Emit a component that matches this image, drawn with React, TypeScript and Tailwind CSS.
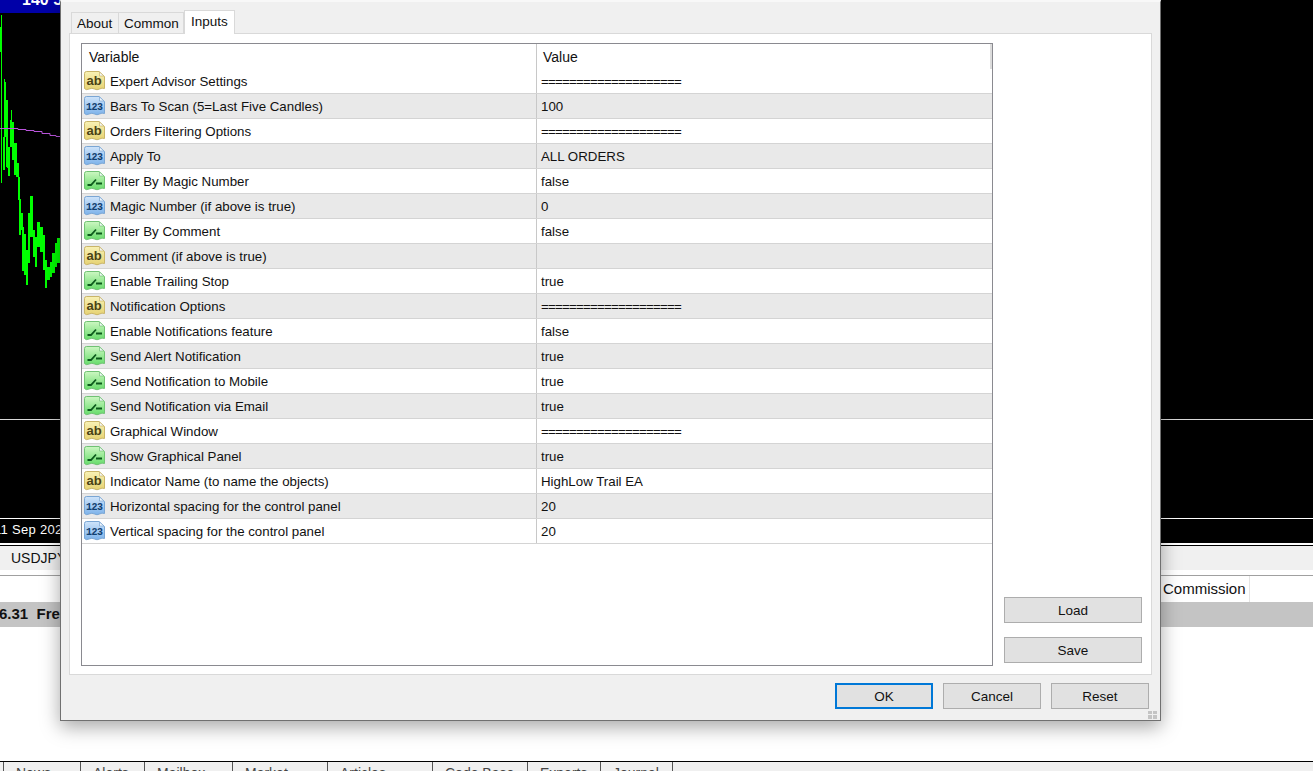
import React from 'react';

type Kind = 'ab' | 'num' | 'bool';
type Row = { kind: Kind; name: string; value: string };

const sep = '====================';

const rows: Row[] = [
  { kind: 'ab', name: 'Expert Advisor Settings', value: sep },
  { kind: 'num', name: 'Bars To Scan (5=Last Five Candles)', value: '100' },
  { kind: 'ab', name: 'Orders Filtering Options', value: sep },
  { kind: 'num', name: 'Apply To', value: 'ALL ORDERS' },
  { kind: 'bool', name: 'Filter By Magic Number', value: 'false' },
  { kind: 'num', name: 'Magic Number (if above is true)', value: '0' },
  { kind: 'bool', name: 'Filter By Comment', value: 'false' },
  { kind: 'ab', name: 'Comment (if above is true)', value: '' },
  { kind: 'bool', name: 'Enable Trailing Stop', value: 'true' },
  { kind: 'ab', name: 'Notification Options', value: sep },
  { kind: 'bool', name: 'Enable Notifications feature', value: 'false' },
  { kind: 'bool', name: 'Send Alert Notification', value: 'true' },
  { kind: 'bool', name: 'Send Notification to Mobile', value: 'true' },
  { kind: 'bool', name: 'Send Notification via Email', value: 'true' },
  { kind: 'ab', name: 'Graphical Window', value: sep },
  { kind: 'bool', name: 'Show Graphical Panel', value: 'true' },
  { kind: 'ab', name: 'Indicator Name (to name the objects)', value: 'HighLow Trail EA' },
  { kind: 'num', name: 'Horizontal spacing for the control panel', value: '20' },
  { kind: 'num', name: 'Vertical spacing for the control panel', value: '20' },
];

// x, width, top, bottom of each green bar on the chart
const bars: number[][] = [
  [0, 2, 27, 52], [1, 1, 15, 183], [3, 2, 137, 170], [4, 1, 79, 170], [5, 1, 82, 137], [6, 2, 100, 167],
  [8, 2, 147, 176], [7, 3, 160, 168], [10, 2, 120, 147], [11, 1, 110, 147], [12, 2, 122, 160],
  [14, 3, 143, 175], [16, 3, 163, 177], [18, 2, 177, 200], [19, 2, 199, 235], [21, 2, 213, 230],
  [22, 2, 227, 271], [24, 2, 234, 275], [26, 2, 250, 285], [28, 2, 213, 263], [30, 3, 196, 237],
  [33, 2, 230, 257], [35, 2, 237, 267], [37, 3, 222, 247], [40, 3, 227, 252], [43, 2, 235, 270],
  [45, 2, 260, 288], [47, 3, 267, 280], [50, 2, 262, 277], [52, 3, 253, 273], [55, 2, 243, 267], [57, 3, 238, 263],
];

const bottomTabs = [
  { name: 'News', w: 'w-[77px]' },
  { name: 'Alerts', w: 'w-[64px]' },
  { name: 'Mailbox', w: 'w-[88px]' },
  { name: 'Market', w: 'w-[95px]' },
  { name: 'Articles', w: 'w-[105px]' },
  { name: 'Code Base', w: 'w-[95px]' },
  { name: 'Experts', w: 'w-[73px]' },
  { name: 'Journal', w: 'w-[72px]' },
];

function Chart() {
  return (
    <svg width="60" height="406" viewBox="0 13 60 406" className="block">
      {bars.map((b, i) => (
        <rect key={i} x={b[0]} y={b[2]} width={b[1]} height={b[3] - b[2]} fill="#00ff00" />
      ))}
      <path d="M0 128.500H18V129.500H26V130.500H34V131.500H42V133.500H50V135.500H56V136.500H60" fill="none" stroke="#bb55dd" strokeWidth="1" />
    </svg>
  );
}

function TypeIcon({ kind }: { kind: Kind }) {
  const id = `grad-${kind}`;
  const top = kind === 'ab' ? '#f8f1b4' : kind === 'num' ? '#cfe4fa' : '#ccf7c2';
  const bottom = kind === 'ab' ? '#e6d272' : kind === 'num' ? '#7cb2ea' : '#66dc6a';
  const line = kind === 'ab' ? '#c9b568' : kind === 'num' ? '#7aa6d4' : '#70c274';
  return (
    <svg width="21" height="20" viewBox="0 0 21 20" className="shrink-0">
      <defs>
        <linearGradient id={id} x1="0" y1="0" x2="0" y2="1">
          <stop offset="0" stopColor={top} />
          <stop offset="1" stopColor={bottom} />
        </linearGradient>
      </defs>
      <path
        d="M2.500 .5H15L20.500 5.500V17.500Q18 16.500 15.500 18T10.500 18T5 18T.5 17.500V2.500Q.5 .5 2.500 .5Z"
        fill={`url(#${id})`}
        stroke={line}
      />
      <path d="M15.500 1V5H20Z" fill="#f4f8fc" stroke={line} strokeWidth=".7" />
      {kind === 'ab' && (
        <text x="2.500" y="14" fontSize="13" fontWeight="700" fill="#4a4216" fontFamily="'Liberation Sans', sans-serif">
          ab
        </text>
      )}
      {kind === 'num' && (
        <text x="2" y="14" fontSize="10" fontWeight="700" fill="#12406f" fontFamily="'Liberation Mono', monospace" textLength="17">
          123
        </text>
      )}
      {kind === 'bool' && <path d="M3.500 14H7L12 8.500M12 12.500H18" fill="none" stroke="#0c5a1c" strokeWidth="1.800" />}
    </svg>
  );
}

function Btn({ label, className }: { label: string; className: string }) {
  return <button className={`h-[26px] bg-[#e1e1e1] pt-[2px] text-[13.5px] text-[#111] ${className}`}>{label}</button>;
}

export default function App() {
  return (
    <div className="relative h-[771px] w-[1313px] overflow-hidden bg-white text-[15px] text-[#111] font-['Liberation_Sans',Arial,sans-serif]">
      {/* terminal behind the dialog */}
      <div className="flex h-[13px] bg-black">
        <div className="w-[1160px] overflow-hidden bg-[#0000a8] pl-[22px] text-[16px] font-bold leading-[0px] text-white">140 5</div>
      </div>
      <div className="h-[406px] bg-black">
        <Chart />
      </div>
      <div className="h-px bg-[#d8d8d8]" />
      <div className="h-[98px] bg-black" />
      <div className="h-px bg-white" />
      <div className="h-[24px] overflow-hidden whitespace-nowrap bg-black text-[13px] leading-[22px] tracking-[0.3px] text-white">
        <span className="-ml-[6px] inline-block">11 Sep 2025</span>
      </div>
      <div className="h-[2px] bg-white" />
      <div className="h-px bg-black" />
      <div className="h-[24px] bg-[#f0f0f0] pl-[11px] text-[14px] leading-[24px]">USDJPY</div>
      <div className="h-[5px] bg-white" />
      <div className="h-px bg-[#a0a0a0]" />
      <div className="flex h-[26px] bg-white pl-[1163px] leading-[25px]">
        <div className="w-[87px] border-r border-[#e4e4e4]">Commission</div>
      </div>
      <div className="h-[25px] whitespace-pre bg-[#c4c4c4] font-bold leading-[24px]">
        <span className="-ml-[1px] inline-block">6.31  Free</span>
      </div>
      <div className="h-[134px] bg-white" />
      <div className="h-px bg-black" />
      <div className="flex h-[10px] overflow-hidden bg-[#f0f0f0] pl-[3px] text-[14px] text-[#444]">
        {bottomTabs.map((t) => (
          <div key={t.name} className={`${t.w} h-[24px] border-l border-[#555] pl-[12px] pt-[3px] leading-[16px]`}>
            {t.name}
          </div>
        ))}
        <div className="h-[24px] border-l border-[#555]" />
      </div>

      {/* the dialog window */}
      <div className="absolute left-[60px] top-0 flex h-[721px] w-[1101px] flex-col border-x border-b border-t-2 border-x-[#707070] border-b-[#707070] border-t-[#f8f8f8] bg-[#f0f0f0] px-[8px] text-[13.5px] shadow-[0_6px_18px_rgba(0,0,0,0.35)]">
        <div className="relative z-10 -mb-px flex h-[32px] items-end pl-[2px]">
          <div className="h-[22px] w-[48px] border border-b-0 border-[#d9d9d9] pl-[5px] leading-[21px]">About</div>
          <div className="h-[22px] w-[65px] border-y border-r border-b-0 border-[#d9d9d9] pl-[5px] leading-[21px]">Common</div>
          <div className="h-[24px] w-[51px] border border-b-0 border-[#d9d9d9] bg-white pl-[6px] leading-[21px]">Inputs</div>
        </div>
        <div className="flex h-[642px] border border-[#d9d9d9] bg-white pl-[11px] pt-[9px]">
          <div className="flex h-[623px] w-[912px] flex-col border border-[#8a8a90] text-[13.3px]">
            <div className="flex h-[25px] border-r-2 border-[#dcdcdc] text-[14px] leading-[27px]">
              <div className="w-[455px] border-r border-[#c8c8c8] pl-[7px]">Variable</div>
              <div className="pl-[6px]">Value</div>
            </div>
            {rows.map((r, i) => (
              <div key={r.name} className={`flex h-[25px] border-b border-[#d4d4d4] leading-[26px] ${i % 2 === 1 ? 'bg-[#e9e9e9]' : 'bg-white'}`}>
                <div className="flex w-[455px] items-center gap-[5px] border-r border-[#c8c8c8] pl-[2px]">
                  <TypeIcon kind={r.kind} />
                  <span className="pt-[2px]">{r.name}</span>
                </div>
                <div className={`pl-[4px] ${r.value === sep ? 'tracking-[-0.77px]' : ''}`}>{r.value}</div>
              </div>
            ))}
          </div>
          <div className="flex h-[623px] flex-col justify-end gap-[14px] pb-[3px] pl-[11px]">
            <Btn label="Load" className="w-[138px] border border-[#adadad]" />
            <Btn label="Save" className="w-[138px] border border-[#adadad]" />
          </div>
        </div>
        <div className="flex justify-end gap-[10px] pr-[3px] pt-[8px]">
          <Btn label="OK" className="w-[98px] border-2 border-[#0078d7]" />
          <Btn label="Cancel" className="w-[98px] border border-[#adadad]" />
          <Btn label="Reset" className="w-[98px] border border-[#adadad]" />
        </div>
        <svg width="9" height="9" viewBox="0 0 9 9" className="absolute bottom-[1px] right-[3px]">
          <path d="M0 1H4V4H0ZM5 1H9V4H5ZM0 5H4V9H0ZM5 5H9V9H5Z" fill="#c4c4c4" />
        </svg>
      </div>
    </div>
  );
}
